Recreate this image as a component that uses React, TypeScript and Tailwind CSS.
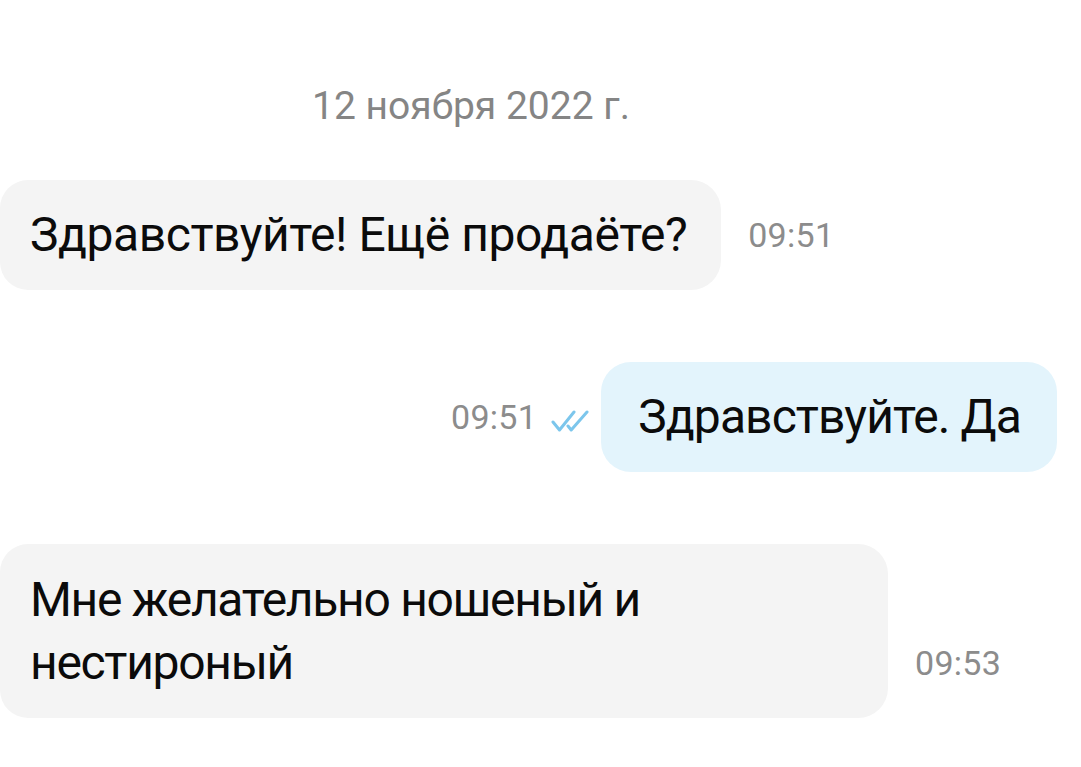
const font = { fontFamily: "Roboto, 'Noto Sans', sans-serif" };

function Checks() {
  return (
    <svg width="38" height="26" viewBox="0 0 38 26" fill="none" stroke="#7cc6ec" strokeWidth="3" strokeLinecap="round" strokeLinejoin="round">
      <path d="M2 14l6.5 8L23 4" />
      <path d="M17 18l3.2 4L36 4" />
    </svg>
  );
}

function Time({ value }: { value: string }) {
  return <span className="mb-[38px] text-[34px] leading-none tracking-[0.3px] text-[#8c8c8c]">{value}</span>;
}

export default function App() {
  return (
    <div className="min-h-[767px] w-[1081px] overflow-hidden bg-white text-[#0b0b0b]" style={font}>
      <div className="w-[942px] pt-[84px] text-center text-[39px] leading-[44px] text-[#858585]">
        12 ноября 2022 г.
      </div>

      <div className="mt-[52px] flex items-end gap-[27px]">
        <div className="rounded-r-[30px] rounded-l-[28px] bg-[#f4f4f4] py-[24px] pl-[30px] pr-[34px] text-[48px] leading-[62px] tracking-[-0.45px]">
          Здравствуйте! Ещё продаёте?
        </div>
        <Time value="09:51" />
      </div>

      <div className="mt-[72px] flex items-end justify-end pr-[24px]">
        <span className="mb-[38px] text-[34px] leading-none tracking-[0.3px] text-[#8c8c8c]">09:51</span>
        <span className="mb-[38px] ml-[14px] mr-[12px]">
          <Checks />
        </span>
        <div className="rounded-[30px] bg-[#e3f4fc] py-[24px] pl-[37px] pr-[36px] text-[48px] leading-[62px] tracking-[-0.9px]">
          Здравствуйте. Да
        </div>
      </div>

      <div className="mt-[72px] flex items-end gap-[27px]">
        <div className="w-[888px] rounded-r-[30px] rounded-l-[28px] bg-[#f4f4f4] py-[24px] pl-[30px] pr-[34px] text-[48px] leading-[63px] tracking-[-1.3px]">
          Мне желательно ношеный и
          <br />
          нестироный
        </div>
        <Time value="09:53" />
      </div>
    </div>
  );
}
